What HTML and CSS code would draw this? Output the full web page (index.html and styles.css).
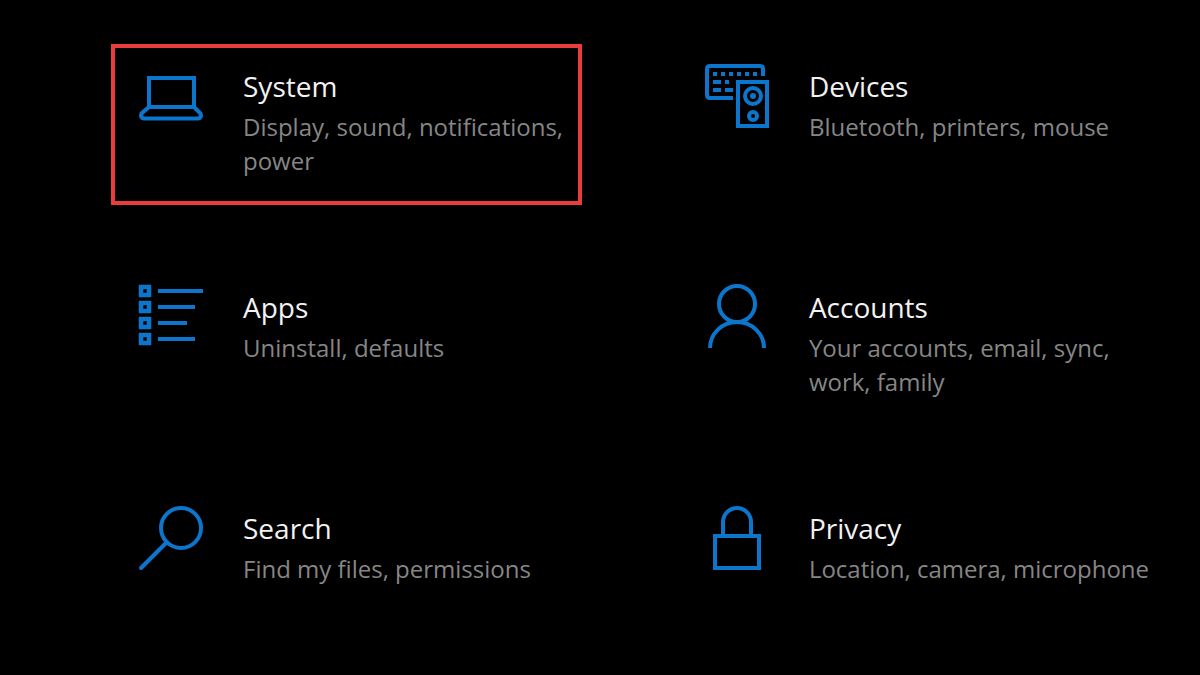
FILE: index.html
```html
<!DOCTYPE html>
<html lang="en">
<head>
    <meta charset="UTF-8">
    <meta name="viewport" content="width=device-width, initial-scale=1.0">
    <title>Settings</title>
    <link rel="stylesheet" href="styles.css">
</head>
<body>

    <main class="settings">
        <a class="tile selected" href="#system">
            <svg class="icon" viewBox="0 0 64 64" aria-hidden="true">
                <path d="M10 14h45v29H10z"/>
                <path d="M10 43L2.500 49.500Q1 54 5 54.500H59Q63 54 61.500 49.500L55 43"/>
            </svg>
            <div class="text">
                <h2>System</h2>
                <p>Display, sound, notifications, power</p>
            </div>
        </a>

        <a class="tile" href="#devices">
            <svg class="icon" viewBox="0 0 64 64" aria-hidden="true">
                <!-- Keyboard -->
                <path d="M58 12V5Q58 2 55 2H5Q2 2 2 5V31Q2 34 5 34H28"/>
                <path d="M8 10h44" stroke-dasharray="4 4"/>
                <path d="M8 18h8M20 18h4M8 26h8M20 26h8"/>
                <!-- Speaker -->
                <path d="M33 18h29v44H33z"/>
                <circle cx="48" cy="32" r="8"/>
                <circle class="fill" cx="48" cy="32" r="3"/>
                <circle cx="48" cy="52" r="4"/>
            </svg>
            <div class="text">
                <h2>Devices</h2>
                <p>Bluetooth, printers, mouse</p>
            </div>
        </a>

        <a class="tile" href="#apps">
            <svg class="icon" viewBox="0 0 64 64" aria-hidden="true">
                <path d="M2 2h8v8H2zM2 18h8v8H2zM2 34h8v8H2zM2 50h8v8H2z" stroke-width="4.500"/>
                <path d="M19 6h45M19 22h37M19 38h29M19 54h37"/>
            </svg>
            <div class="text">
                <h2>Apps</h2>
                <p>Uninstall, defaults</p>
            </div>
        </a>

        <a class="tile" href="#accounts">
            <svg class="icon" viewBox="0 0 64 64" aria-hidden="true">
                <circle cx="32" cy="19" r="18"/>
                <path d="M5 63A27 26 0 0 1 59 63"/>
            </svg>
            <div class="text">
                <h2>Accounts</h2>
                <p>Your accounts, email, sync, work, family</p>
            </div>
        </a>

        <a class="tile" href="#search">
            <svg class="icon" viewBox="0 0 64 64" aria-hidden="true">
                <circle cx="42" cy="22" r="20"/>
                <path d="M27 37L2 62" stroke-linecap="round"/>
            </svg>
            <div class="text">
                <h2>Search</h2>
                <p>Find my files, permissions</p>
            </div>
        </a>

        <a class="tile" href="#privacy">
            <svg class="icon" viewBox="0 0 64 64" aria-hidden="true">
                <path d="M10 30h44v32H10z"/>
                <path d="M18 30V16A14 14 0 0 1 46 16V30"/>
            </svg>
            <div class="text">
                <h2>Privacy</h2>
                <p>Location, camera, microphone</p>
            </div>
        </a>
    </main>

</body>
</html>
```

FILE: styles.css
```css
body {
    margin: 0;
    background: #000;
    color: #f2f2f2;
    font-family: "Segoe UI", "Open Sans", "Noto Sans", sans-serif;
}

/* Two columns of category tiles */
.settings {
    display: grid;
    grid-template-columns: 49fr 51fr;
    gap: 60px 95px;
    padding: 44px 33px 0 111px;
}

.tile {
    display: flex;
    gap: 40px;
    box-sizing: border-box;
    min-height: 161px;
    padding: 16px 0 16px 24px;
    border: 4px solid transparent;
    color: inherit;
    text-decoration: none;
}

.tile.selected {
    border-color: #e93d3d;
}

/* Line icons */
.icon {
    flex: none;
    width: 64px;
    height: 64px;
    overflow: visible;
    fill: none;
    stroke: #0c75cc;
    stroke-width: 4;
}

.icon .fill {
    fill: #0c75cc;
    stroke: none;
}

.text {
    flex: 1;
    padding-top: 4px;
}

.text h2 {
    margin: 0 0 6px;
    font-size: 28px;
    font-weight: 400;
    line-height: 36px;
}

.text p {
    margin: 0;
    color: #868686;
    font-size: 24px;
    line-height: 34px;
}
```
